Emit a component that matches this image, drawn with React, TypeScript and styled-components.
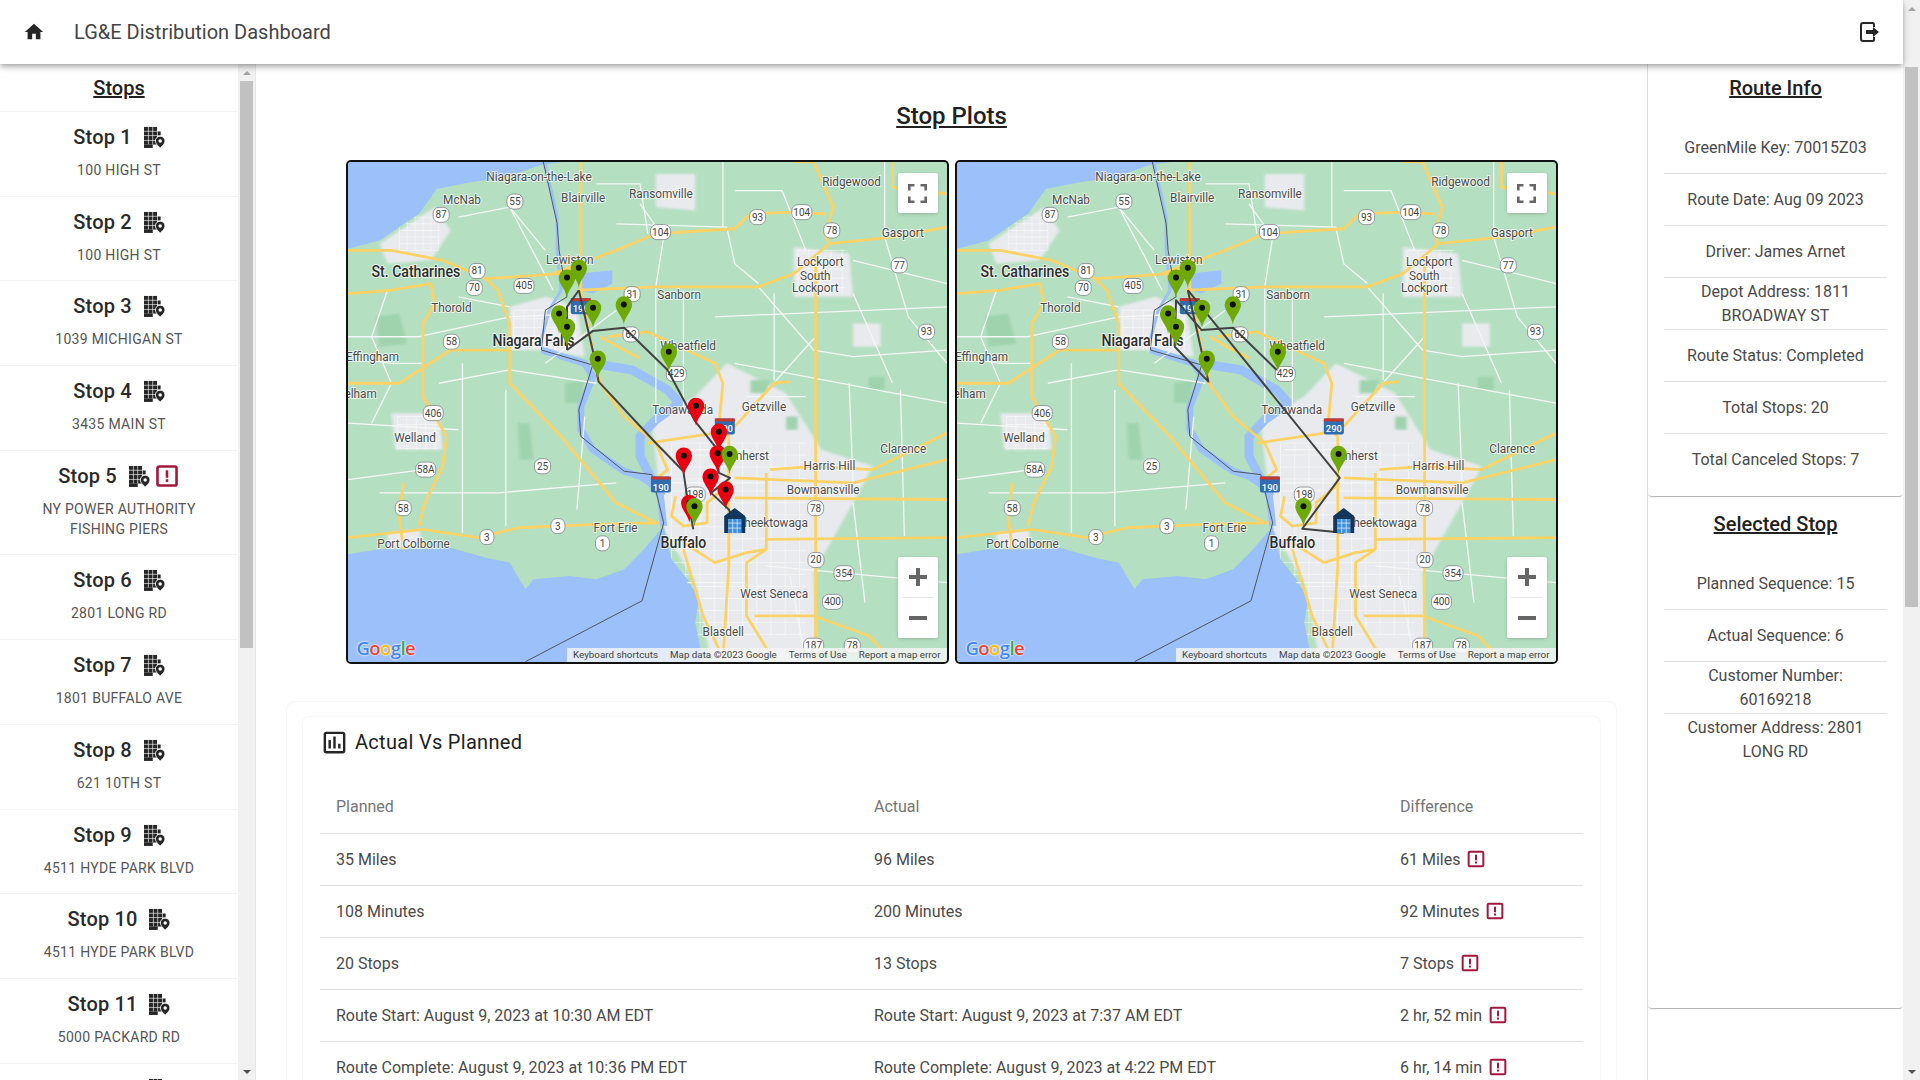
import React from 'react';
import styled, { createGlobalStyle } from 'styled-components';
import { MdHome, MdOutlineAssessment } from 'react-icons/md';

const GlobalStyle = createGlobalStyle`
  html, body, #root {
    height: 100%;
  }
  body {
    margin: 0;
    overflow: hidden;
    background: #fff;
    font-family: Roboto, "Liberation Sans", sans-serif;
    color: rgba(0, 0, 0, 0.87);
  }
`;

const Page = styled.div`
  display: flex;
  height: 100vh;
  overflow: hidden;
`;

const PageColumn = styled.div`
  flex: 1;
  min-width: 0;
  display: flex;
  flex-direction: column;
`;

const ScrollRail = styled.div`
  flex: 0 0 17px;
  display: flex;
  flex-direction: column;
  align-items: center;
  background: #f1f1f1;
`;

const RailArrow = styled.div<{ $down?: boolean; $dim?: boolean }>`
  flex: 0 0 17px;
  width: 100%;
  display: flex;
  align-items: center;
  justify-content: center;
  margin-top: ${({ $down }) => ($down ? 'auto' : '0')};

  &::before {
    content: '';
    border-left: 4px solid transparent;
    border-right: 4px solid transparent;
    border-top: ${({ $down }) => ($down ? '4px solid #505050' : 'none')};
    border-bottom: ${({ $down, $dim }) => ($down ? 'none' : `4px solid ${$dim ? '#a3a3a3' : '#505050'}`)};
  }
`;

const RailThumb = styled.div<{ $h: number; $offset: number }>`
  width: 13px;
  height: ${({ $h }) => $h}px;
  margin-top: ${({ $offset }) => $offset}px;
  background: #c1c1c1;
`;

const AppBar = styled.header`
  position: relative;
  z-index: 10;
  flex: 0 0 64px;
  display: flex;
  align-items: center;
  padding: 0 21px 0 23px;
  background: #fff;
  box-shadow: 0 2px 4px -1px rgba(0, 0, 0, 0.2), 0 4px 5px 0 rgba(0, 0, 0, 0.14), 0 1px 10px 0 rgba(0, 0, 0, 0.12);
`;

const AppTitle = styled.div`
  margin-left: 29px;
  flex: 1;
  font-size: 20px;
  color: #444;
`;

const Shell = styled.div`
  flex: 1;
  min-height: 0;
  display: flex;
  overflow: hidden;
`;

const Sidebar = styled.aside`
  flex: 0 0 256px;
  box-sizing: border-box;
  display: flex;
  border-right: 1px solid #e6e6e6;
`;

const StopList = styled.div`
  flex: 1;
  min-width: 0;
  overflow: hidden;
`;

const PanelHeading = styled.h2`
  margin: 0;
  padding: 8px 0 7px;
  font-size: 20px;
  line-height: 32px;
  font-weight: 500;
  text-align: center;
  text-decoration: underline;
  color: #212121;
`;

const StopItem = styled.div`
  box-sizing: border-box;
  padding: 9px 32px 15.7px;
  border-top: 1px solid #f3f3f3;
  text-align: center;
`;

const StopTitle = styled.div`
  display: flex;
  justify-content: center;
  align-items: center;
  height: 32px;
  margin-bottom: 7px;
  font-size: 20px;
  font-weight: 500;
  letter-spacing: 0.15px;
  color: #2a2a2a;
`;

const StopIcons = styled.span`
  display: inline-flex;
  align-items: center;
  gap: 4px;
  margin-left: 12px;
`;

const StopAddress = styled.div`
  font-size: 14px;
  line-height: 20px;
  letter-spacing: 0.3px;
  color: #555;
`;

const Main = styled.main`
  flex: 1;
  min-width: 0;
  overflow: hidden;
  padding: 36px 31px 0;
`;

const PageHeading = styled.h1`
  margin: 0 0 28px;
  font-size: 24px;
  line-height: 32px;
  font-weight: 500;
  text-align: center;
  text-decoration: underline;
  color: #212121;
`;

const MapsRow = styled.div`
  display: flex;
  justify-content: center;
  gap: 6px;
  margin-bottom: 38px;
`;

const MapFrame = styled.div`
  position: relative;
  flex: 0 0 603px;
  box-sizing: border-box;
  height: 504px;
  border: 2px solid #111;
  border-radius: 5px;
  overflow: hidden;
  background: #b5dfc1;
`;

const MapSvg = styled.svg`
  display: block;
  width: 599px;
  height: 500px;
  font-family: Roboto, sans-serif;
`;

const MapButton = styled.div`
  position: absolute;
  right: 9px;
  top: 11px;
  width: 40px;
  height: 40px;
  display: flex;
  align-items: center;
  justify-content: center;
  background: #fff;
  border-radius: 2px;
  box-shadow: 0 1px 4px -1px rgba(0, 0, 0, 0.3);
`;

const ZoomControl = styled.div`
  position: absolute;
  right: 9px;
  bottom: 24px;
  width: 40px;
  height: 81px;
  display: flex;
  flex-direction: column;
  align-items: center;
  background: #fff;
  border-radius: 2px;
  box-shadow: 0 1px 4px -1px rgba(0, 0, 0, 0.3);
`;

const ZoomStep = styled.div`
  flex: 1;
  width: 32px;
  display: flex;
  align-items: center;
  justify-content: center;
  & + & {
    border-top: 1px solid #e6e6e6;
  }
`;

const GoogleMark = styled.div`
  position: absolute;
  left: 9px;
  bottom: 1px;
  font-family: "Open Sans", sans-serif;
  font-size: 18.5px;
  line-height: 26px;
  font-weight: 600;
  letter-spacing: -0.6px;
  text-shadow: 0 0 2px #fff, 0 0 2px #fff;
`;

const GoogleLetter = styled.span<{ $c: string }>`
  color: ${({ $c }) => $c};
`;

const MapFooter = styled.div`
  position: absolute;
  right: 0;
  bottom: 0;
  height: 14px;
  display: flex;
  align-items: center;
  gap: 12px;
  padding: 0 6px;
  background: rgba(245, 245, 245, 0.8);
  font-size: 9.8px;
  line-height: 14px;
  white-space: nowrap;
  color: #444;
`;

const OuterCard = styled.section`
  padding: 15px 16px 60px;
  border-radius: 8px;
  box-shadow: 0 0 2px rgba(0, 0, 0, 0.12);
`;

const InnerCard = styled.div`
  padding: 14px 17px 40px;
  border-radius: 6px;
  box-shadow: 0 0 2px rgba(0, 0, 0, 0.12);
`;

const CardHeader = styled.div`
  display: flex;
  align-items: center;
  gap: 6px;
  height: 22px;
  margin-bottom: 28px;
  font-size: 20px;
  letter-spacing: 0.3px;
  color: #212121;
`;

const ResultTable = styled.table`
  width: 100%;
  table-layout: fixed;
  border-collapse: collapse;
  font-size: 16px;
`;

const HeadCell = styled.th<{ $w: number }>`
  width: ${({ $w }) => $w}px;
  height: 52px;
  box-sizing: border-box;
  padding: 0 16px 1px;
  border-bottom: 1px solid #e0e0e0;
  text-align: left;
  font-weight: 400;
  color: #757575;
`;

const BodyCell = styled.td`
  height: 52px;
  box-sizing: border-box;
  padding: 0 16px;
  border-bottom: 1px solid #e0e0e0;
  color: #4a4a4a;
`;

const DiffValue = styled.span`
  display: inline-flex;
  align-items: center;
  gap: 6px;
`;

const InfoColumn = styled.aside`
  flex: 0 0 256px;
  box-sizing: border-box;
  border-left: 1px solid #e0e0e0;
`;

const InfoCard = styled.div<{ $h: number; $top: number }>`
  box-sizing: border-box;
  height: ${({ $h }) => $h}px;
  padding-top: ${({ $top }) => $top}px;
  border-radius: 0 0 4px 4px;
  box-shadow: 0 2px 1px -1px rgba(0, 0, 0, 0.2), 0 1px 1px 0 rgba(0, 0, 0, 0.14);
`;

const InfoList = styled.div`
  margin: 11px 16px 0;
`;

const InfoRow = styled.div<{ $last?: boolean }>`
  box-sizing: border-box;
  height: 52px;
  display: flex;
  align-items: center;
  justify-content: center;
  padding: 0 8px;
  border-bottom: ${({ $last }) => ($last ? 'none' : '1px solid #e0e0e0')};
  font-size: 16px;
  line-height: 24px;
  text-align: center;
  color: #4a4a4a;
`;

const ROADS = [
  '20 300 130 300 260 330 370 385 440 380 560 370 610 345',
  '370 385 400 420 430 520 430 700 560 860 700 1060 800 1120',
  '20 430 130 420 230 400 240 460 210 520 210 740 270 860 260 950 215 1060 200 1130',
  '20 1165 210 1140 350 1165 450 1135 650 1125 810 1120',
  '20 700 150 700 280 600 430 600',
  '540 370 700 300 800 250 1000 235 1040 190 1150 185 1230 190',
  '1200 34 1250 170 1230 250 1240 280',
  '1205 320 1205 1536',
  '600 420 800 410 1060 410 1150 370 1240 280 1400 260 1538 230',
  '610 34 610 420 640 600 660 700 720 800 800 880 830 960 800 990',
  '660 560 720 600 760 625',
  '680 560 780 545 950 640 970 700 960 830 985 860',
  '985 860 985 1250 970 1536',
  '780 880 950 850 1000 840',
  '1000 830 1100 700 1140 695',
  '1080 970 1080 1200 1030 1240 1030 1400 1100 1536',
  '1000 985 1300 1000 1538 930',
  '1090 960 1200 950 1350 960 1538 850',
  '1000 1045 1538 1050',
  '1080 1170 1538 1165',
  '870 1180 950 1240 1030 1210 1080 1200',
  '870 1200 920 1400 960 1500',
  '1050 1400 1200 1400 1340 1460 1400 1536',
  '850 1040 840 1100 870 1130 930 1120 930 1060 990 1000',
  '160 1000 150 1100 160 1200',
  '1400 32 1400 110 1538 130',
  '1150 32 1200 34',
];

const MINOR = [
  '20 560 200 560 430 500 620 490',
  '300 200 430 170 520 300',
  '250 700 430 660 650 700',
  '100 1030 400 1030 700 1000',
  '310 640 310 1150',
  '420 720 420 1130',
  '600 1080 620 800',
  '700 220 980 230 1000 340 1060 400',
  '970 32 970 230',
  '800 410 800 820',
  '870 420 870 780',
  '1060 410 1200 600 1300 620 1538 600',
  '950 500 1538 470',
  '1000 640 1538 760',
  '1205 560 1000 830',
  '1380 32 1380 260 1440 500 1538 640',
  '1290 700 1300 1000',
  '1420 720 1430 1160',
  '1080 1250 1538 1300',
  '1140 1280 1180 1536',
  '20 820 300 840',
  '20 990 210 960',
  '120 420 80 560 130 700 80 820',
  '760 160 820 260 800 410',
  '430 170 540 420',
  '1300 1060 1330 1360',
  '850 900 1040 900',
  '830 1000 1080 1000',
  '880 1300 1030 1300',
  '1030 740 1180 740',
  '20 620 130 640 210 640',
  '1000 120 1120 120 1180 300',
  '650 100 760 100 780 250',
  '1300 330 1538 400',
  '1300 430 1400 700',
  '1100 430 1100 690',
  '520 640 700 480',
  '300 440 430 470',
];

// street grids inside the built up areas
const gridLines = (x0: number, x1: number, y0: number, y1: number, step: number) => {
  const out: string[] = [];
  for (let x = x0; x <= x1; x += step) out.push(`${x} ${y0} ${x} ${y1}`);
  for (let y = y0; y <= y1; y += step) out.push(`${x0} ${y} ${x1} ${y}`);
  return out;
};

const STREETS = [
  ...gridLines(840, 1180, 880, 1460, 36),
  ...gridLines(440, 600, 480, 600, 26),
  ...gridLines(150, 250, 200, 300, 20),
  ...gridLines(145, 250, 800, 900, 24),
  ...gridLines(1160, 1280, 300, 430, 28),
];

const CITIES = [
  '100 280 240 170 280 240 230 330 120 340',
  '430 470 520 440 600 470 620 620 500 600 430 600',
  '130 790 250 790 260 900 140 900',
  '1150 290 1290 310 1300 440 1150 440',
  '790 820 900 740 980 640 1130 730 1220 900 1350 950 1300 1060 1200 1270 1210 1536 940 1536 900 1300 820 1140',
  '800 70 900 70 900 180 800 170',
  '120 1150 200 1140 210 1190 120 1195',
  '1300 520 1370 520 1370 590 1300 590',
];

const PARKS = [
  '90 500 150 490 170 580 100 590',
  '570 700 620 690 610 760 570 760',
  '450 820 480 820 490 930 455 930',
  '1040 690 1090 690 1080 730 1040 730',
  '1340 680 1380 680 1380 720 1340 720',
  '1130 800 1160 800 1160 840 1130 840',
];

type Label = [string, number, number, number?, number?];

const LABELS: Label[] = [
  ['Niagara-on-the-Lake', 504, 78],
  ['McNab', 309, 147],
  ['Blairville', 616, 141],
  ['Ransomville', 813, 129],
  ['Ridgewood', 1296, 93],
  ['Gasport', 1426, 247],
  ['Lewiston', 582, 327],
  ['Lockport', 1217, 333],
  ['South', 1204, 375],
  ['Lockport', 1204, 412],
  ['St. Catharines', 192, 367, 16, 500],
  ['Sanborn', 859, 432],
  ['Thorold', 282, 471],
  ['Niagara Falls', 490, 573, 16, 500],
  ['Effingham', 82, 619],
  ['Wheatfield', 882, 587],
  ['elham', 52, 732],
  ['Tonawanda', 868, 780],
  ['Getzville', 1074, 771],
  ['Welland', 190, 864],
  ['Amherst', 1030, 916],
  ['Clarence', 1427, 895],
  ['Harris Hill', 1240, 948],
  ['Bowmansville', 1224, 1020],
  ['Cheektowaga', 1095, 1120],
  ['Fort Erie', 698, 1135],
  ['Buffalo', 870, 1183, 16, 500],
  ['Port Colborne', 186, 1182],
  ['West Seneca', 1100, 1332],
  ['Blasdell', 971, 1446],
];

const SHIELDS: [string, number, number][] = [
  ['55', 443, 153], ['87', 256, 193], ['93', 1058, 200], ['104', 1170, 185], ['104', 812, 245],
  ['78', 1246, 240], ['81', 347, 362], ['70', 340, 413], ['405', 466, 407], ['77', 1417, 345],
  ['31', 740, 432], ['58', 282, 575], ['93', 1486, 545], ['429', 852, 672], ['406', 236, 790],
  ['25', 513, 950], ['58A', 217, 960], ['58', 160, 1076], ['78', 1205, 1076], ['3', 552, 1130],
  ['3', 372, 1163], ['1', 665, 1182], ['20', 1206, 1232], ['354', 1277, 1272], ['400', 1248, 1358],
  ['187', 1200, 1490], ['78', 1298, 1490], ['198', 900, 1035], ['62', 737, 553],
];

const INTERSTATES: [string, number, number][] = [
  ['190', 813, 1005], ['190', 610, 468], ['290', 975, 830],
];

const BORDER_LINE = '515 34 550 220 555 300 575 440 520 480 510 600 640 645 605 780 610 860 720 965 790 975 820 1120 765 1355 470 1538';

const GREEN_PINS: [number, number][] = [
  [575, 382], [605, 352], [555, 490], [575, 530], [641, 473], [719, 463], [833, 605], [653, 626], [987, 913], [898, 1070],
];

const RED_PINS: [number, number][] = [
  [902, 768], [960, 846], [871, 918], [957, 911], [939, 981], [977, 1020], [885, 1060],
];

const ROUTE_ONE = [
  '605 420 640 600 655 695 800 880 870 965 878 1030 895 1140',
  '575 600 640 543 720 533 830 660 900 815 950 890 960 970 988 985 940 1030 985 1080 1000 1115',
  '605 420 575 470 575 600',
];

const ROUTE_TWO = [
  '605 420 657 695 572 590 575 450 640 540 720 533 830 660',
  '605 420 990 985 895 1138 1000 1150',
];

const mapX = (z: number) => (z - 20) * 0.3946;
const mapY = (z: number) => (z - 34) * 0.3322;

function Pin({ x, y, color }: { x: number; y: number; color: string }) {
  return (
    <g transform={`translate(${mapX(x)} ${mapY(y)})`}>
      <path d="M0 20C-1 12-8.2 7-8.2 0A8.2 8.2 0 1 1 8.2 0C8.2 7 1 12 0 20Z" fill={color} />
      <circle r="3" fill="#111" />
    </g>
  );
}

function RoadMap({ routes, showRed, id }: { routes: string[]; showRed?: boolean; id: string }) {
  return (
    <MapSvg viewBox="0 0 599 500">
      <defs>
        <filter id={id}>
          <feGaussianBlur stdDeviation="4" />
        </filter>
      </defs>
      <g transform="scale(0.3946 0.3322) translate(-20 -34)" fill="none" strokeLinejoin="round">
        <g filter={`url(#${id})`}>
          {CITIES.map((p) => <polygon key={p} points={p} fill="#e8eaed" />)}
          {PARKS.map((p) => <polygon key={p} points={p} fill="#9fd3ae" />)}
        </g>
        {STREETS.map((p) => <polyline key={p} points={p} stroke="#fff" strokeOpacity="0.7" strokeWidth="0.7" vectorEffect="non-scaling-stroke" />)}
        <polygon fill="#9cc0f9" points="20 34 565 34 510 42 420 80 330 95 245 115 200 190 100 270 20 295" />
        <polygon fill="#9cc0f9" points="20 1215 100 1200 200 1200 280 1195 370 1225 430 1240 470 1320 490 1290 580 1280 650 1290 720 1260 770 1200 820 1130 840 1230 880 1290 910 1350 900 1420 920 1540 20 1540" />
        <polygon fill="#9cc0f9" points="610 370 690 360 690 400 640 430 605 420" />
        <polyline stroke="#9cc0f9" strokeWidth="7" vectorEffect="non-scaling-stroke" points="820 1130 810 1020 760 980 720 965 640 900 610 840 610 770 640 680 620 640 510 600" />
        <polyline stroke="#9cc0f9" strokeWidth="9" vectorEffect="non-scaling-stroke" points="640 640 740 660 830 720 860 760 800 810 760 860 760 920 790 990 815 1040" />
        <polyline stroke="#9cc0f9" strokeWidth="3" vectorEffect="non-scaling-stroke" points="505 590 530 480 560 420 550 300 550 200 520 40" />
        {MINOR.map((p) => <polyline key={p} points={p} stroke="#f4f7f5" strokeWidth="1.3" vectorEffect="non-scaling-stroke" />)}
        {ROADS.map((p) => <polyline key={p} points={p} stroke="#fbd266" strokeWidth="2.8" vectorEffect="non-scaling-stroke" />)}
        <polyline points={BORDER_LINE} stroke="#4c5560" strokeWidth="1" vectorEffect="non-scaling-stroke" />
      </g>
      {SHIELDS.map(([t, x, y]) => {
        const w = t.length > 2 ? 20 : t.length > 1 ? 16 : 14;
        return (
          <g key={`${t}-${x}`} transform={`translate(${mapX(x)} ${mapY(y)})`}>
            <rect x={-w / 2} y="-7.5" width={w} height="15" rx="6" fill="#fff" stroke="#7d8287" strokeWidth="0.8" />
            <text textAnchor="middle" y="3.5" fontSize="10" fill="#444">{t}</text>
          </g>
        );
      })}
      {INTERSTATES.map(([t, x, y]) => (
        <g key={`${t}-${x}`} transform={`translate(${mapX(x)} ${mapY(y)})`}>
          <rect x="-10" y="-8" width="20" height="16" rx="2" fill="#2f6db0" />
          <rect x="-10" y="-8" width="20" height="3" fill="#c8362e" />
          <text textAnchor="middle" y="6" fontSize="9.5" fontWeight="500" fill="#fff">{t}</text>
        </g>
      ))}
      {LABELS.map(([t, x, y, size, weight]) => (
        <text
          key={`${t}-${y}`}
          transform={`translate(${mapX(x)} ${mapY(y) + 4.5}) scale(0.88 1)`}
          textAnchor="middle"
          fontSize={size ?? 13.4}
          fontWeight={weight ?? 400}
          fill={size ? '#2c2c2c' : '#4a4a4a'}
          stroke="#fff"
          strokeOpacity="0.75"
          strokeWidth="2"
          paintOrder="stroke"
        >
          {t}
        </text>
      ))}
      <g transform="scale(0.3946 0.3322) translate(-20 -34)" fill="none" strokeLinejoin="round">
        {routes.map((p) => <polyline key={p} points={p} stroke="#424242" strokeWidth="2" vectorEffect="non-scaling-stroke" />)}
      </g>
      {showRed && RED_PINS.map(([x, y]) => <Pin key={`${x}-${y}`} x={x} y={y} color="#e60012" />)}
      {GREEN_PINS.map(([x, y]) => <Pin key={`${x}-${y}`} x={x} y={y} color="#6ea908" />)}
      <g transform={`translate(${mapX(1000) - 10.5} ${mapY(1115) - 13})`}>
        <path d="M0 25V8L10.5 0 21 8V25H17V11H4V25Z" fill="#12365c" />
        <rect x="4" y="11" width="13" height="14" fill="#3f8fe0" />
        <path d="M4 15H17M4 20H17M8.5 11V25M13 11V25" stroke="#d8eafc" strokeWidth="0.8" />
      </g>
    </MapSvg>
  );
}

function MapPanel({ routes, showRed, id }: { routes: string[]; showRed?: boolean; id: string }) {
  return (
    <MapFrame>
      <RoadMap routes={routes} showRed={showRed} id={id} />
      <MapButton>
        <svg width="19" height="19" viewBox="0 0 19 19" fill="none" stroke="#666" strokeWidth="2.6">
          <path d="M1.300 6.500V1.300H6.500M12.500 1.300H17.700V6.500M17.700 12.500V17.700H12.500M6.500 17.700H1.300V12.500" />
        </svg>
      </MapButton>
      <ZoomControl>
        <ZoomStep>
          <svg width="18" height="18" viewBox="0 0 18 18" fill="#666"><path d="M7 0h4v7h7v4h-7v7H7v-7H0V7h7z" /></svg>
        </ZoomStep>
        <ZoomStep>
          <svg width="18" height="4" viewBox="0 0 18 4" fill="#666"><rect width="18" height="4" /></svg>
        </ZoomStep>
      </ZoomControl>
      <GoogleMark>
        <GoogleLetter $c="#4285f4">G</GoogleLetter>
        <GoogleLetter $c="#ea4335">o</GoogleLetter>
        <GoogleLetter $c="#fbbc05">o</GoogleLetter>
        <GoogleLetter $c="#4285f4">g</GoogleLetter>
        <GoogleLetter $c="#34a853">l</GoogleLetter>
        <GoogleLetter $c="#ea4335">e</GoogleLetter>
      </GoogleMark>
      <MapFooter>
        <span>Keyboard shortcuts</span>
        <span>Map data ©2023 Google</span>
        <span>Terms of Use</span>
        <span>Report a map error</span>
      </MapFooter>
    </MapFrame>
  );
}

function AlertIcon({ size }: { size: number }) {
  return (
    <svg width={size} height={size} viewBox="0 0 24 24" fill="none">
      <rect x="3.2" y="3.2" width="17.6" height="17.6" rx="1.5" stroke="#a3173c" strokeWidth="2.4" />
      <rect x="10.8" y="6.8" width="2.4" height="6.8" fill="#a3173c" />
      <rect x="10.8" y="15" width="2.4" height="2.4" fill="#a3173c" />
    </svg>
  );
}

function BuildingPin() {
  const cells: [number, number][] = [];
  [0, 5.2, 10.4].forEach((x) => [1, 6.2, 11.4, 16.6].forEach((y) => cells.push([x, y])));
  return (
    <svg width="21" height="22" viewBox="0 0 24 25" fill="#262626">
      {cells.map(([x, y]) => <rect key={`${x}-${y}`} x={x} y={y} width="4.500" height="4.500" />)}
      <rect x="0" y="21" width="10" height="4" />
      <rect x="15.600" y="6.200" width="3.400" height="4.500" />
      <path d="M18.500 11.500a5.500 5.500 0 0 1 5.500 5.600c0 3.600-5.500 7.900-5.500 7.900S13 20.700 13 17.100a5.500 5.500 0 0 1 5.500-5.600Z" stroke="#fff" strokeWidth="1" />
      <circle cx="18.500" cy="17" r="2" fill="#fff" />
    </svg>
  );
}

function LogoutIcon() {
  return (
    <svg width="24" height="24" viewBox="0 0 24 24" fill="none">
      <path d="M16 7V4.500A1.500 1.500 0 0 0 14.500 3H5A2 2 0 0 0 3 5V19A2 2 0 0 0 5 21H14.500A1.500 1.500 0 0 0 16 19.500V17" stroke="#262626" strokeWidth="2" />
      <path d="M8 10H15V7L21 12 15 17V14H8Z" fill="#262626" />
    </svg>
  );
}

const STOPS = [
  '100 HIGH ST', '100 HIGH ST', '1039 MICHIGAN ST', '3435 MAIN ST', 'NY POWER AUTHORITY FISHING PIERS',
  '2801 LONG RD', '1801 BUFFALO AVE', '621 10TH ST', '4511 HYDE PARK BLVD', '4511 HYDE PARK BLVD',
  '5000 PACKARD RD', '',
];

const COMPARISON = [
  ['35 Miles', '96 Miles', '61 Miles'],
  ['108 Minutes', '200 Minutes', '92 Minutes'],
  ['20 Stops', '13 Stops', '7 Stops'],
  ['Route Start: August 9, 2023 at 10:30 AM EDT', 'Route Start: August 9, 2023 at 7:37 AM EDT', '2 hr, 52 min'],
  ['Route Complete: August 9, 2023 at 10:36 PM EDT', 'Route Complete: August 9, 2023 at 4:22 PM EDT', '6 hr, 14 min'],
];

const ROUTE_INFO = [
  'GreenMile Key: 70015Z03',
  'Route Date: Aug 09 2023',
  'Driver: James Arnet',
  'Depot Address: 1811 BROADWAY ST',
  'Route Status: Completed',
  'Total Stops: 20',
  'Total Canceled Stops: 7',
];

const SELECTED_STOP = [
  'Planned Sequence: 15',
  'Actual Sequence: 6',
  'Customer Number: 60169218',
  'Customer Address: 2801 LONG RD',
];

export default function App() {
  return (
    <Page>
      <GlobalStyle />
      <PageColumn>
        <AppBar>
          <MdHome size={22} color="#262626" />
          <AppTitle>LG&amp;E Distribution Dashboard</AppTitle>
          <LogoutIcon />
        </AppBar>
        <Shell>
          <Sidebar>
            <StopList>
              <PanelHeading>Stops</PanelHeading>
              {STOPS.map((address, i) => (
                <StopItem key={i}>
                  <StopTitle>
                    Stop {i + 1}
                    <StopIcons>
                      <BuildingPin />
                      {i === 4 && <AlertIcon size={26} />}
                    </StopIcons>
                  </StopTitle>
                  {address && <StopAddress>{address}</StopAddress>}
                </StopItem>
              ))}
            </StopList>
            <ScrollRail>
              <RailArrow $dim />
              <RailThumb $h={567} $offset={0} />
              <RailArrow $down />
            </ScrollRail>
          </Sidebar>
          <Main>
            <PageHeading>Stop Plots</PageHeading>
            <MapsRow>
              <MapPanel routes={ROUTE_ONE} showRed id="blur-a" />
              <MapPanel routes={ROUTE_TWO} id="blur-b" />
            </MapsRow>
            <OuterCard>
              <InnerCard>
                <CardHeader>
                  <MdOutlineAssessment size={29} color="#262626" />
                  Actual Vs Planned
                </CardHeader>
                <ResultTable>
                  <thead>
                    <tr>
                      <HeadCell $w={538}>Planned</HeadCell>
                      <HeadCell $w={526}>Actual</HeadCell>
                      <HeadCell $w={199}>Difference</HeadCell>
                    </tr>
                  </thead>
                  <tbody>
                    {COMPARISON.map(([planned, actual, diff]) => (
                      <tr key={planned}>
                        <BodyCell>{planned}</BodyCell>
                        <BodyCell>{actual}</BodyCell>
                        <BodyCell>
                          <DiffValue>{diff}<AlertIcon size={20} /></DiffValue>
                        </BodyCell>
                      </tr>
                    ))}
                  </tbody>
                </ResultTable>
              </InnerCard>
            </OuterCard>
          </Main>
          <InfoColumn>
            <InfoCard $h={432} $top={0}>
              <PanelHeading>Route Info</PanelHeading>
              <InfoList>
                {ROUTE_INFO.map((row, i) => (
                  <InfoRow key={row} $last={i === ROUTE_INFO.length - 1}>{row}</InfoRow>
                ))}
              </InfoList>
            </InfoCard>
            <InfoCard $h={512} $top={4}>
              <PanelHeading>Selected Stop</PanelHeading>
              <InfoList>
                {SELECTED_STOP.map((row, i) => (
                  <InfoRow key={row} $last={i === SELECTED_STOP.length - 1}>{row}</InfoRow>
                ))}
              </InfoList>
            </InfoCard>
          </InfoColumn>
        </Shell>
      </PageColumn>
      <ScrollRail>
        <RailArrow $dim />
        <RailThumb $h={540} $offset={50} />
        <RailArrow $down />
      </ScrollRail>
    </Page>
  );
}
